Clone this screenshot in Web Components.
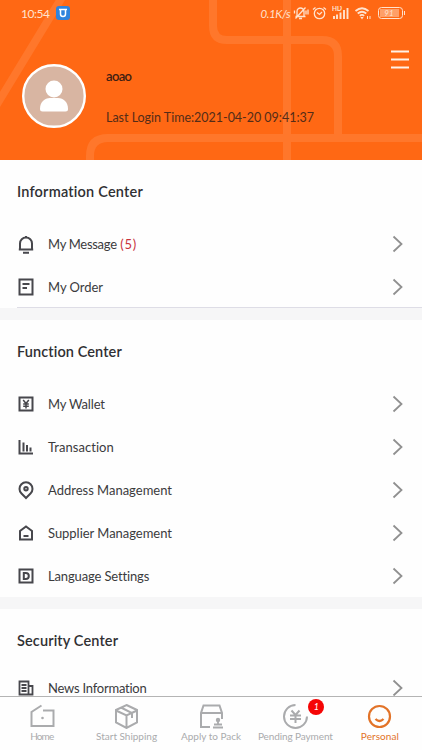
<!DOCTYPE html>
<html lang="en">
<head>
<meta charset="utf-8">
<meta name="viewport" content="width=device-width, initial-scale=1">
<title>Personal</title>
<style>
  body {
    margin: 0;
    background: #fefefe;
    font-family: Lato, "Open Sans", sans-serif;
    color: #333;
  }
</style>
</head>
<body>
<personal-page></personal-page>

<script>
// Line of text spread over a fixed width with letter spacing
class FitText extends HTMLElement {
  constructor() {
    super();
    this.attachShadow({ mode: "open" });
    this.shadowRoot.innerHTML = `
      <style>
        :host { display: inline-block; white-space: nowrap; }
        span { display: inline-block; }
      </style>
      <span><slot></slot></span>
    `;
  }

  connectedCallback() {
    const span = this.shadowRoot.querySelector("span");
    const width = parseFloat(this.getAttribute("width"));
    const count = this.textContent.length;
    const natural = span.getBoundingClientRect().width;
    this.style.width = `${width}px`;
    span.style.letterSpacing = `${(width - natural) / (count - 1)}px`;
  }
}

const ICONS = {
  bell: `<path d="M4 15.500V9.500a6 6 0 0 1 12 0v6M2.800 15.500h14.400M10 3.500V2M7 18.700h6"/>`,
  order: `<path d="M3.500 2.500h13v15h-13zM6.500 7h7M6.500 11h4.500"/>`,
  wallet: `<path d="M3.500 3.500h13v13h-13z"/><path d="M7.200 6l2.800 3.500L12.800 6M10 9.500v5M7.200 10h5.600M7.200 12.300h5.600" stroke-width="1.500"/>`,
  chart: `<path d="M3.500 3v13.500h13.500M7.500 5.500v9M11 8v6.500M14.500 10.500v4"/>`,
  pin: `<path d="M10 18L5.500 13.500a6.500 6.500 0 1 1 9 0z"/><circle cx="10" cy="8.800" r="1.700"/>`,
  house: `<path d="M4 16.500V8L10 3.500 16 8v8.500zM7.500 13h5"/>`,
  language: `<path d="M3.500 3.500h13v13h-13z"/><path d="M7.800 7h2a3 3 0 0 1 0 6h-2z"/>`,
  news: `<path d="M3.500 3.500h9v13h-9zM12.500 8h4v8.500h-4M5.500 7h5M5.500 10h5M5.500 13h5" stroke-width="1.800"/>`
};

class MenuRow extends HTMLElement {
  constructor() {
    super();
    this.attachShadow({ mode: "open" });
    this.shadowRoot.innerHTML = `
      <style>
        :host {
          display: flex;
          align-items: center;
          height: 43px;
          padding: 0 19px 0 16px;
          font-size: 13px;
          line-height: 18px;
          color: #3b3b3d;
        }
        svg { display: block; fill: none; }
        .icon { width: 20px; height: 20px; margin-right: 12px; stroke: #47474c; stroke-width: 2; }
        .label { flex: 1; }
        .arrow { width: 11px; height: 18px; stroke: #909090; stroke-width: 1.8; }
      </style>
      <svg class="icon" viewBox="0 0 20 20">${ICONS[this.getAttribute("icon")]}</svg>
      <span class="label"><slot></slot></span>
      <svg class="arrow" viewBox="0 0 11 18"><path d="M1.500 1.500L9.500 9l-8 7.500"/></svg>
    `;
  }
}

class MenuSection extends HTMLElement {
  constructor() {
    super();
    this.attachShadow({ mode: "open" });
    this.shadowRoot.innerHTML = `
      <style>
        :host { display: block; border-bottom: 12px solid #f6f6f7; }
        h2 {
          display: flex;
          align-items: center;
          box-sizing: border-box;
          height: var(--title-height, 62px);
          margin: 0;
          padding: var(--title-drop, 2px) 17px 0;
          font-size: 14.500px;
          font-weight: 600;
          line-height: 20px;
          color: #303033;
        }
      </style>
      <h2><slot name="title"></slot></h2>
      <slot></slot>
    `;
  }
}

class StatusBar extends HTMLElement {
  constructor() {
    super();
    this.attachShadow({ mode: "open" });
    this.shadowRoot.innerHTML = `
      <style>
        :host {
          display: flex;
          align-items: center;
          height: 26px;
          padding: 0 17px 0 21px;
          font-size: 12px;
          color: #ffe3cf;
        }
        svg { display: block; fill: none; stroke: #ffe3cf; stroke-width: 1.300; }
        .app { margin-left: 6px; }
        .speed { margin-left: auto; font-size: 11.500px; font-style: italic; }
        .battery {
          display: flex;
          align-items: center;
          margin-left: 6px;
        }
        .cell {
          box-sizing: border-box;
          width: 25px;
          height: 12px;
          padding: 1px;
          border: 1.500px solid #ffe3cf;
          border-radius: 3.500px;
        }
        .level {
          display: block;
          width: 19px;
          height: 8px;
          background: #ff9f68;
          font-size: 8px;
          font-style: italic;
          line-height: 8px;
          text-align: center;
        }
        .cap { width: 1.500px; height: 4px; margin-left: 1px; background: #ffe3cf; }
      </style>
      <fit-text width="29">10:54</fit-text>
      <svg class="app" width="14" height="14" viewBox="0 0 14 14">
        <rect width="14" height="14" rx="3" fill="#2f83dc" stroke="none"/>
        <path d="M3 3.500h2M9 3.500h2M4.500 3.500v4.500a2.500 2.500 0 0 0 5 0V3.500z" stroke="#fff" stroke-width="1.500"/>
      </svg>
      <span class="speed"><fit-text width="30">0.1K/s</fit-text></span>
      <svg width="16" height="14" viewBox="0 0 16 14" style="margin-left:2px">
        <path d="M4 10V5.500a3.500 3.500 0 0 1 7 0V10M2.500 10.500h10M6 12.500h3M12.500 1.500L2.500 12.500M13 4.500v4M15 3.500v5M1.500 4.500v3"/>
      </svg>
      <svg width="15" height="14" viewBox="0 0 15 14" style="margin-left:3px">
        <circle cx="7.500" cy="7.500" r="5.200"/><path d="M1 3.500L3.500 1.500M11.500 1.500L14 3.500M5 6.500l2.500 2L10 6"/>
      </svg>
      <svg width="17" height="14" viewBox="0 0 17 14" style="margin-left:5px">
        <text x="0" y="5" font-family="Lato, sans-serif" font-size="6.500" font-weight="700" fill="#ffe3cf" stroke="none">HD</text>
        <path d="M2 13v-3M5 13V8.500M8.500 13V6.500M12 13V4M15.500 13V2" stroke-width="1.900"/>
      </svg>
      <svg width="18" height="14" viewBox="0 0 18 14" style="margin-left:5px">
        <path d="M1.500 5q6.500-5.500 13 0M3.700 7.500q4.300-3.500 8.600 0M5.800 9.800q2.200-1.700 4.400 0" stroke-width="1.700"/>
        <path d="M8 13.500L6.400 11h3.200z" fill="#ffe3cf" stroke="none"/>
        <path d="M13.500 10v3M16 10v3" stroke-width="1"/>
      </svg>
      <div class="battery"><span class="cell"><span class="level">91</span></span><span class="cap"></span></div>
    `;
  }
}

class ProfileHeader extends HTMLElement {
  constructor() {
    super();
    this.attachShadow({ mode: "open" });
    this.shadowRoot.innerHTML = `
      <style>
        :host {
          display: grid;
          grid-template-rows: 26px 1fr;
          position: relative;
          height: 160px;
          background: #ff6814;
          overflow: hidden;
        }
        .pattern { position: absolute; inset: 0; fill: none; stroke: #ff772b; stroke-width: 8; }
        status-bar { position: relative; }
        .profile {
          display: grid;
          position: relative;
          grid-template-columns: 64px 1fr auto;
          padding: 24px 12px 0 22px;
          align-items: start;
          column-gap: 20px;
        }
        svg { display: block; }
        .avatar { margin-top: 14px; }
        .info {
          display: flex;
          flex-direction: column;
          align-items: flex-start;
          gap: 26px;
          padding-top: 18px;
          font-size: 12.500px;
          line-height: 16px;
          color: #542c18;
        }
        .name { font-weight: 600; font-size: 13px; color: #3f2012; }
        .menu { fill: none; stroke: #fff1e7; stroke-width: 2; }
      </style>
      <svg class="pattern" width="422" height="160" viewBox="0 0 422 160">
        <path d="M64-6L-4 106M287-4v170M213-4v30q0 14 14 14h95q16 0 16 16v82M90 164v-8q0-18 18-18h318"/>
      </svg>
      <status-bar></status-bar>
      <div class="profile">
        <svg class="avatar" width="64" height="64" viewBox="0 0 64 64">
          <circle cx="32" cy="32" r="30.800" fill="#d8b5a2" stroke="#fff" stroke-width="2.400"/>
          <circle cx="32" cy="25" r="8.500" fill="#fff"/>
          <path d="M18 45c0-7 4.500-11 10-11h8c5.500 0 10 4 10 11q0 2.500-2.500 2.500h-23Q18 47.500 18 45z" fill="#fff"/>
        </svg>
        <div class="info">
          <fit-text class="name" width="26">aoao</fit-text>
          <fit-text width="208">Last Login Time:2021-04-20 09:41:37</fit-text>
        </div>
        <svg class="menu" width="20" height="20" viewBox="0 0 20 20"><path d="M1 1.500h18M1 9.500h18M1 17.500h18"/></svg>
      </div>
    `;
  }
}

const TAB_ICONS = {
  home: `<path d="M14.500 3.500L4.500 10v14h22v-15.500H16"/><circle cx="15.500" cy="16" r="1.300" fill="currentColor" stroke="none"/>`,
  ship: `<path d="M15.500 3L26 8v12.500L15.500 26 5 20.500V8zM5 8.500l10.500 5L26 8.500M15.500 13.500V26M10 5.500l11 5.500v5"/>`,
  pack: `<path d="M14 25H5V11L7.500 3.500h16L26 11v6M5 11h21"/><path d="M22 18v5M18 22.500h8M17 25.500h10" stroke-width="1.800"/><circle cx="22" cy="18" r="2.200" fill="currentColor" stroke="none"/>`,
  pay: `<path d="M15.500 3A11.500 11.500 0 1 0 27 14.500"/><path d="M11.500 8.500l4 4.500 4-4.500M15.500 13v8M10 13.500h11M10 17h11"/>`,
  face: `<circle cx="15.500" cy="14.500" r="10.500" stroke-width="2.200"/><path d="M11.500 17q4 4 8 0" stroke-width="2.400"/>`
};

class TabItem extends HTMLElement {
  constructor() {
    super();
    this.attachShadow({ mode: "open" });
    const badge = this.getAttribute("badge");
    this.shadowRoot.innerHTML = `
      <style>
        :host {
          display: flex;
          flex-direction: column;
          align-items: center;
          position: relative;
          flex: 1;
          padding-top: 5px;
          font-size: 10px;
          line-height: 14px;
          color: #aaabad;
        }
        :host([active]) { color: #e27328; }
        svg { display: block; width: 31px; height: 27px; fill: none; stroke: currentColor; stroke-width: 2; }
        .badge {
          position: absolute;
          top: 2px;
          left: calc(50% + 13px);
          width: 16px;
          height: 16px;
          border-radius: 50%;
          background: #f50505;
          color: #fff;
          font-size: 9px;
          font-style: italic;
          line-height: 16px;
          text-align: center;
        }
      </style>
      <svg viewBox="0 0 31 27">${TAB_ICONS[this.getAttribute("icon")]}</svg>
      <slot></slot>
      ${badge ? `<span class="badge">${badge}</span>` : ""}
    `;
  }
}

class TabBar extends HTMLElement {
  constructor() {
    super();
    this.attachShadow({ mode: "open" });
    this.shadowRoot.innerHTML = `
      <style>
        :host {
          display: flex;
          box-sizing: border-box;
          height: 54px;
          border-top: 1px solid #b4b4b4;
          background: #fefefe;
        }
      </style>
      <slot></slot>
    `;
  }
}

class PersonalPage extends HTMLElement {
  constructor() {
    super();
    this.attachShadow({ mode: "open" });
    this.shadowRoot.innerHTML = `
      <style>
        :host { display: flex; flex-direction: column; height: 750px; overflow: hidden; }
        main { flex: 1; min-height: 0; overflow: hidden; }
        .divider { height: 1px; margin: -1px 0 0 17px; background: #dedde6; }
        .last { --title-height: 57px; --title-drop: 6px; }
        .count { color: #c8323c; }
      </style>
      <profile-header></profile-header>
      <main>
        <menu-section>
          <fit-text slot="title" width="126">Information Center</fit-text>
          <menu-row icon="bell"><fit-text width="69">My Message</fit-text> <fit-text class="count" width="16">(5)</fit-text></menu-row>
          <menu-row icon="order"><fit-text width="55">My Order</fit-text></menu-row>
          <div class="divider"></div>
        </menu-section>
        <menu-section>
          <fit-text slot="title" width="105">Function Center</fit-text>
          <menu-row icon="wallet"><fit-text width="57">My Wallet</fit-text></menu-row>
          <menu-row icon="chart"><fit-text width="66">Transaction</fit-text></menu-row>
          <menu-row icon="pin"><fit-text width="124">Address Management</fit-text></menu-row>
          <menu-row icon="house"><fit-text width="124">Supplier Management</fit-text></menu-row>
          <menu-row icon="language"><fit-text width="101">Language Settings</fit-text></menu-row>
        </menu-section>
        <menu-section class="last">
          <fit-text slot="title" width="101">Security Center</fit-text>
          <menu-row icon="news"><fit-text width="99">News Information</fit-text></menu-row>
        </menu-section>
      </main>
      <tab-bar>
        <tab-item icon="home"><fit-text width="24">Home</fit-text></tab-item>
        <tab-item icon="ship"><fit-text width="61">Start Shipping</fit-text></tab-item>
        <tab-item icon="pack"><fit-text width="60">Apply to Pack</fit-text></tab-item>
        <tab-item icon="pay" badge="1"><fit-text width="75">Pending Payment</fit-text></tab-item>
        <tab-item icon="face" active><fit-text width="38">Personal</fit-text></tab-item>
      </tab-bar>
    `;
  }
}

// Containers first, so the text is measured with its final styles
customElements.define("personal-page", PersonalPage);
customElements.define("profile-header", ProfileHeader);
customElements.define("status-bar", StatusBar);
customElements.define("menu-section", MenuSection);
customElements.define("menu-row", MenuRow);
customElements.define("tab-bar", TabBar);
customElements.define("tab-item", TabItem);
customElements.define("fit-text", FitText);
</script>
</body>
</html>
